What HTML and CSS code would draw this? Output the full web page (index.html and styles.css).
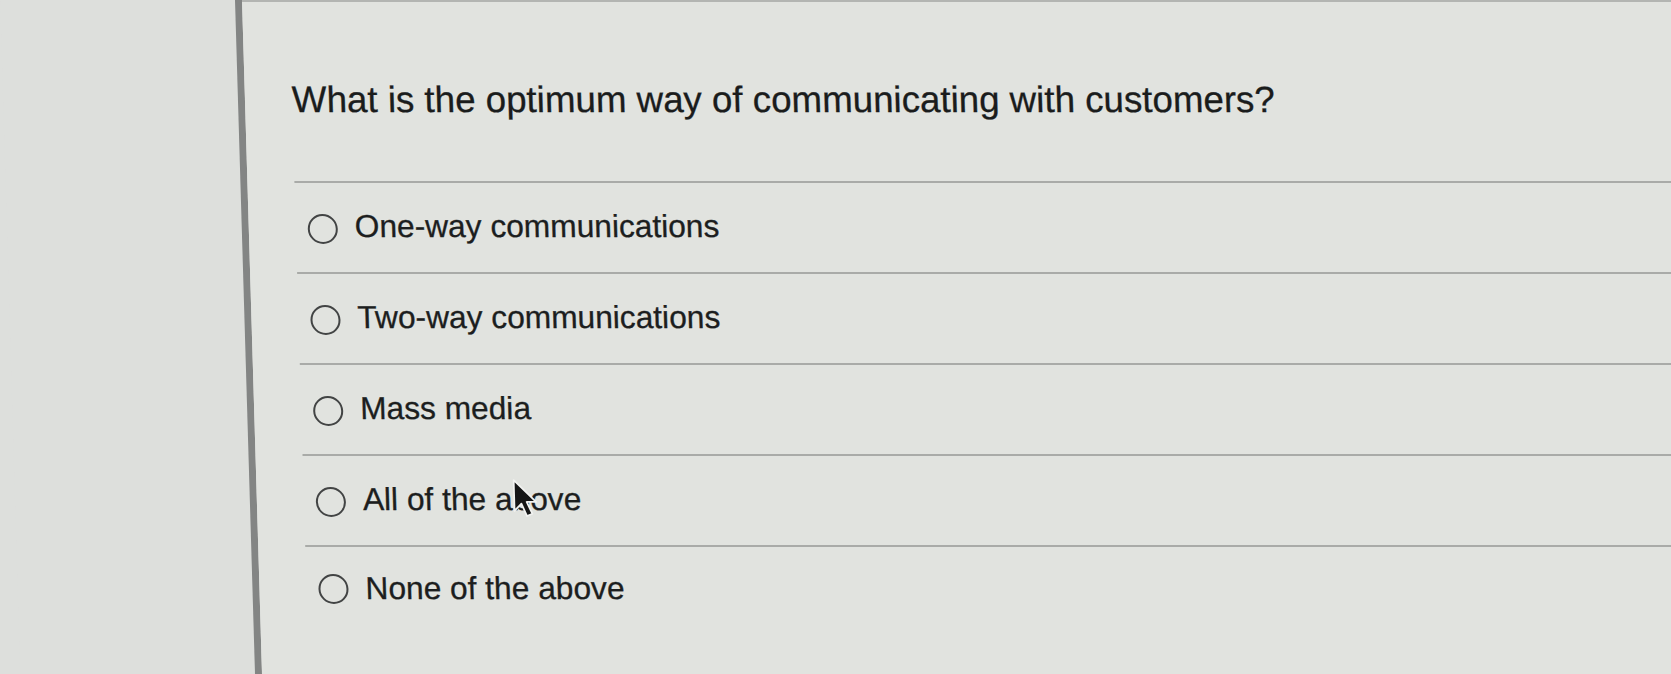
FILE: index.html
```html
<!DOCTYPE html>
<html lang="en">
<head>
<meta charset="utf-8">
<title>Quiz question</title>
<link rel="stylesheet" href="styles.css">
</head>
<body>
  <div class="screen">
    <aside class="sidebar"></aside>
    <main class="quiz">
      <h1 class="question">What is the optimum way of communicating with customers?</h1>
      <ul class="options">
        <li class="option"><span class="radio"></span><span class="label">One-way communications</span></li>
        <li class="option"><span class="radio"></span><span class="label">Two-way communications</span></li>
        <li class="option"><span class="radio"></span><span class="label">Mass media</span></li>
        <li class="option"><span class="radio"></span><span class="label">All of the above</span>
          <svg class="cursor" width="26" height="40" viewBox="0 0 22 34" aria-hidden="true">
            <path d="M2 1 L2 27 L8 21 L12.5 31.5 L17 29.5 L12.5 19.5 L20.5 19.5 Z" fill="#151616" stroke="#f2f3f1" stroke-width="1.5" stroke-linejoin="round"/>
          </svg>
        </li>
        <li class="option"><span class="radio"></span><span class="label">None of the above</span></li>
      </ul>
    </main>
  </div>
</body>
</html>
```

FILE: styles.css
```css
html, body {
  margin: 0;
  padding: 0;
  height: 674px;
  overflow: hidden;
  background: #dddfdc;
}

.screen {
  display: flex;
  height: 700px;
  width: 1720px;
  transform: skewX(1.7deg);
  transform-origin: 0 0;
  font-family: "Liberation Sans", Arial, sans-serif;
}

.sidebar {
  flex: 0 0 235px;
  background: #dddfdc;
  border-right: 7px solid #838584;
}

.quiz {
  flex: 1;
  background: #e1e3df;
  border-top: 2px solid #b3b5b2;
  padding: 77px 0 0 47px;
}

.question {
  margin: 0;
  font-size: 36.7px;
  line-height: 42px;
  font-weight: normal;
  color: #1a1c1c;
  -webkit-text-stroke: 0.3px #1a1c1c;
  white-space: nowrap;
}

.options {
  list-style: none;
  margin: 60px 0 0 0;
  padding: 0;
}

.option {
  position: relative;
  display: flex;
  align-items: center;
  box-sizing: border-box;
  height: 91px;
  padding: 0 0 3px 12px;
  border-top: 2px solid #a9aba8;
}

.option:last-child {
  height: 140px;
  align-items: flex-start;
  padding-top: 23px;
}

.option:last-child .radio {
  margin-top: 4px;
}

.radio {
  flex: 0 0 auto;
  box-sizing: border-box;
  width: 30px;
  height: 30px;
  margin-top: 6px;
  border: 2.2px solid #424444;
  border-radius: 50%;
}

.label {
  margin-left: 17px;
  font-size: 31.7px;
  line-height: 36px;
  color: #1c1e1e;
  -webkit-text-stroke: 0.3px #1c1e1e;
  white-space: nowrap;
}

.cursor {
  position: absolute;
  left: 208px;
  top: 23px;
}
```
